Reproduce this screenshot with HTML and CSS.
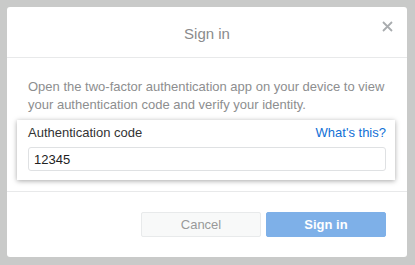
FILE: index.html
```html
<!DOCTYPE html>
<html lang="en">

<head>
    <meta charset="UTF-8" />
    <meta name="viewport" content="width=device-width, initial-scale=1.0" />
    <title>Sign in</title>
    <link rel="stylesheet" href="styles.css">
</head>

<body>
    <div class="modal">
        <div class="modal-header">
            <span class="modal-title">Sign in</span>
            <span class="close">
                <svg width="11" height="11" viewBox="0 0 11 11">
                    <path d="M1 1 L10 10 M10 1 L1 10" stroke="#a9acaf" stroke-width="1.8" />
                </svg>
            </span>
        </div>

        <div class="modal-body">
            <p class="intro">Open the two-factor authentication app on your device to view your authentication code and verify your identity.</p>
            <div class="code-box">
                <div class="code-label">
                    <span>Authentication code</span>
                    <a href="#" class="help">What's this?</a>
                </div>
                <input class="code-input" type="text" value="12345">
            </div>
        </div>

        <div class="modal-footer">
            <button class="btn cancel">Cancel</button>
            <button class="btn primary">Sign in</button>
        </div>
    </div>
</body>

</html>
```

FILE: styles.css
```css
body {
    margin: 0;
    padding: 7px;
    background: #c9cac9;
    font-family: "Liberation Sans", Arial, Helvetica, sans-serif;
    font-size: 13px;
}

.modal {
    width: 400px;
    height: 250px;
    background: #fff;
    border-radius: 3px;
    display: flex;
    flex-direction: column;
    box-sizing: border-box;
}

.modal-header {
    height: 50px;
    border-bottom: 1px solid #e8e9ea;
    display: flex;
    align-items: center;
    justify-content: center;
    position: relative;
    flex-shrink: 0;
}

.modal-title {
    font-size: 15px;
    color: #8a8b8c;
    margin-top: 2px;
}

.close {
    position: absolute;
    right: 14px;
    top: 14px;
    display: flex;
}

.modal-body {
    padding: 20px 21px 11px;
    border-bottom: 1px solid #e8e9ea;
}

.intro {
    margin: 0 0 6px;
    color: #8d8e8f;
    line-height: 18px;
}

.code-box {
    margin: 0 -9px 0 -11px;
    padding: 4px 9px 9px 11px;
    background: #fff;
    box-shadow: 0 1px 5px rgba(0, 0, 0, 0.35);
}

.code-label {
    display: flex;
    justify-content: space-between;
    line-height: 18px;
    color: #333;
    margin-bottom: 5px;
}

.help {
    color: #1070d6;
    text-decoration: none;
}

.code-input {
    display: block;
    width: 100%;
    height: 24px;
    box-sizing: border-box;
    border: 1px solid #dfe1e3;
    border-radius: 3px;
    padding: 0 5px;
    font-family: inherit;
    font-size: 13px;
    color: #222;
    outline: none;
}

.modal-footer {
    flex: 1;
    display: flex;
    justify-content: flex-end;
    align-items: flex-start;
    gap: 5px;
    padding: 20px 21px 0;
}

.btn {
    width: 120px;
    height: 25px;
    border-radius: 2px;
    font-family: inherit;
    font-size: 13px;
}

.cancel {
    background: #f8f9f9;
    border: 1px solid #e8eaeb;
    color: #999;
}

.primary {
    background: #7eb0e8;
    border: 1px solid #7eb0e8;
    color: #fff;
    font-weight: bold;
}
```
